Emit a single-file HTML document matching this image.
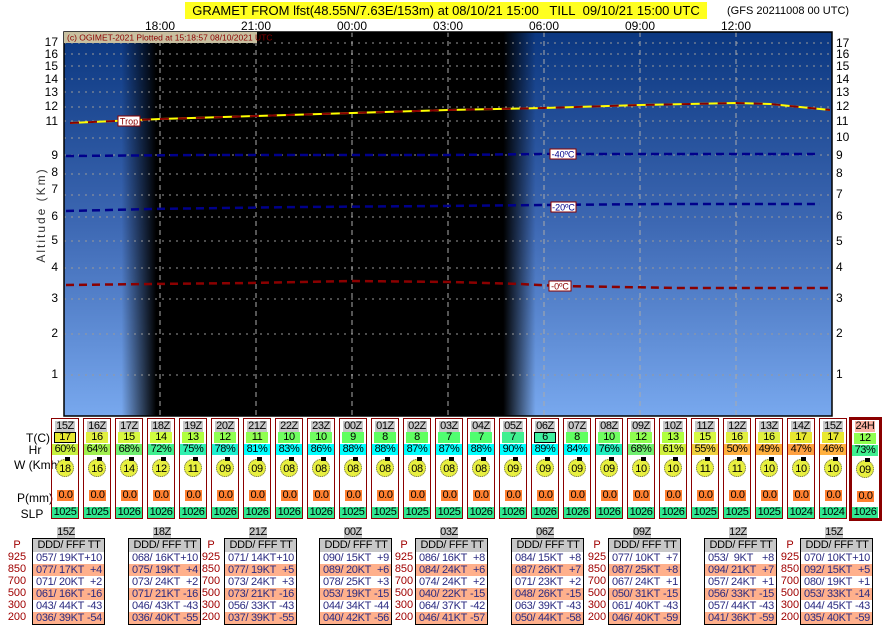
<!DOCTYPE html>
<html><head><meta charset="utf-8"><style>
*{margin:0;padding:0;box-sizing:border-box}
body{width:896px;height:640px;background:#fff;position:relative;overflow:hidden;font-family:"Liberation Sans",sans-serif;color:#000}
.a{position:absolute}
.title{left:185px;top:2px;width:522px;height:17px;background:#ffff20;font-size:13px;line-height:17px;text-align:center;white-space:nowrap}
.gfs{left:727px;top:5px;font-size:11px}
.tl{top:19px;font-size:12px;width:50px;text-align:center;margin-left:-25px}
.yl{font-size:12px;line-height:12px;width:20px}
.yl.l{left:38px;text-align:right}
.yl.r{left:836px}
.c{position:absolute;top:418px;width:28px;height:101px;border:1px solid #8b0000;font-size:11px;letter-spacing:-0.4px}
.c b{position:absolute;font-weight:normal;text-align:center;height:11px;line-height:11px}
.h{top:2px;left:3px;width:20px;background:#c8c8c8}
.t{top:13px;left:2px;width:22px}
.r{top:25px;left:0;width:26px}
.w{top:40px;left:4px;width:18px;height:18px!important;line-height:18px!important;border-radius:50%;border:1px dotted #666;background:#e8f040}
.w:before{content:"";position:absolute;left:8px;top:-3px;width:5px;height:4px;background:#000}
.p{top:71px;left:5px;width:17px;background:#ff8030}
.s{top:88px;left:0;width:26px;background:#30e890}
.lab{font-size:12px;left:13px;width:50px;text-align:center}
.tb{position:absolute;top:538px;width:73px;height:87px;border:1.5px solid #000;font-size:11px;color:#2a2a80;letter-spacing:-0.3px}
.tb div{height:12px;line-height:12px;display:flex;justify-content:space-between;padding:0 2px 0 3px}
.tb div.hd{height:13px;line-height:13px;background:#c8c8c8;color:#000;justify-content:center}
.tb div.o{background:#ffb08c}
.th{position:absolute;top:527px;width:18px;height:11px;background:#c8c8c8;font-size:11px;line-height:11px;text-align:center;letter-spacing:-0.4px}
.pl{position:absolute;top:539px;width:26px;font-size:11px;color:#a00000;text-align:center;line-height:12px}
.pl span{display:block;height:12px}
</style></head><body>
<div class="a title">GRAMET FROM lfst(48.55N/7.63E/153m) at 08/10/21 15:00&nbsp;&nbsp; TILL&nbsp; 09/10/21 15:00 UTC</div>
<div class="a gfs">(GFS 20211008 00 UTC)</div>
<div class="a tl" style="left:160px">18:00</div><div class="a tl" style="left:256px">21:00</div><div class="a tl" style="left:352px">00:00</div><div class="a tl" style="left:448px">03:00</div><div class="a tl" style="left:544px">06:00</div><div class="a tl" style="left:640px">09:00</div><div class="a tl" style="left:736px">12:00</div>

<svg class="a" style="left:0;top:0" width="896" height="640">
<defs>
<linearGradient id="bg" x1="0" y1="0" x2="0" y2="1"><stop offset="0" stop-color="#0b3780"/><stop offset="0.5" stop-color="#3d68b3"/><stop offset="1" stop-color="#78a8ee"/></linearGradient>
<linearGradient id="dk" gradientUnits="userSpaceOnUse" x1="64" y1="0" x2="832" y2="0">
<stop offset="0" stop-color="#000" stop-opacity="0"/>
<stop offset="0.075" stop-color="#000" stop-opacity="0"/>
<stop offset="0.12" stop-color="#000" stop-opacity="1"/>
<stop offset="0.572" stop-color="#000" stop-opacity="1"/>
<stop offset="0.614" stop-color="#000" stop-opacity="0"/>
<stop offset="1" stop-color="#000" stop-opacity="0"/>
</linearGradient>
</defs>
<rect x="64" y="32" width="768" height="384" fill="url(#bg)"/>
<rect x="64" y="32" width="768" height="384" fill="url(#dk)"/>
<g stroke="#999" stroke-width="1" stroke-dasharray="2 5">
<line x1="64" x2="832" y1="43" y2="43"/><line x1="64" x2="832" y1="54" y2="54"/><line x1="64" x2="832" y1="66" y2="66"/><line x1="64" x2="832" y1="79" y2="79"/><line x1="64" x2="832" y1="92" y2="92"/><line x1="64" x2="832" y1="107" y2="107"/><line x1="64" x2="832" y1="121" y2="121"/><line x1="64" x2="832" y1="138" y2="138"/><line x1="64" x2="832" y1="155" y2="155"/><line x1="64" x2="832" y1="174" y2="174"/><line x1="64" x2="832" y1="195" y2="195"/><line x1="64" x2="832" y1="217" y2="217"/><line x1="64" x2="832" y1="241" y2="241"/><line x1="64" x2="832" y1="268" y2="268"/><line x1="64" x2="832" y1="299" y2="299"/><line x1="64" x2="832" y1="334" y2="334"/><line x1="64" x2="832" y1="375" y2="375"/>
</g>
<g stroke="#aaa" stroke-width="1" stroke-dasharray="5 4">
<line x1="160" x2="160" y1="32" y2="416"/><line x1="256" x2="256" y1="32" y2="416"/><line x1="352" x2="352" y1="32" y2="416"/><line x1="448" x2="448" y1="32" y2="416"/><line x1="544" x2="544" y1="32" y2="416"/><line x1="640" x2="640" y1="32" y2="416"/><line x1="736" x2="736" y1="32" y2="416"/>
</g>
<polyline fill="none" stroke="#ffff00" stroke-width="2" points="70,123 160,119 256,116 352,113 448,110 544,108 640,105 736,103 770,104 800,107 830,110"/>
<polyline fill="none" stroke="#8b0000" stroke-width="2" stroke-dasharray="9 9" points="70,123 160,119 256,116 352,113 448,110 544,108 640,105 736,103 770,104 800,107 830,110"/>
<polyline fill="none" stroke="#00008b" stroke-width="2.5" stroke-dasharray="8 5" points="66,156 200,155 450,155 544,154 820,154"/>
<polyline fill="none" stroke="#00008b" stroke-width="2.5" stroke-dasharray="8 5" points="66,211 150,209 300,207 440,206 545,205 660,204 820,204"/>
<polyline fill="none" stroke="#8b0000" stroke-width="2.5" stroke-dasharray="8 5" points="66,285 150,284 250,283 352,281 450,282 520,284 560,286 680,288 832,288"/>
<rect x="64" y="32" width="768" height="384" fill="none" stroke="#000" stroke-width="1.5"/>
<rect x="118" y="116" width="22" height="10" fill="#fff" stroke="#8b0000"/><text x="129" y="124.5" font-size="9" text-anchor="middle" fill="#8b0000" font-family="Liberation Sans">Trop</text>
<rect x="550" y="149" width="26" height="10" fill="#fff" stroke="#8b0000"/><text x="563" y="157.5" font-size="9" text-anchor="middle" fill="#00008b" font-family="Liberation Sans">-40ºC</text>
<rect x="551" y="202" width="25" height="10" fill="#fff" stroke="#8b0000"/><text x="563.5" y="210.5" font-size="9" text-anchor="middle" fill="#00008b" font-family="Liberation Sans">-20ºC</text>
<rect x="549" y="281" width="22" height="10" fill="#fff" stroke="#8b0000"/><text x="560" y="289.5" font-size="9" text-anchor="middle" fill="#8b0000" font-family="Liberation Sans">-0ºC</text>
<rect x="64" y="32" width="193" height="11" fill="#c8c0a0"/>
<text x="67" y="40.5" font-size="8.5" fill="#8b0000" font-family="Liberation Sans">(c) OGIMET-2021 Plotted at 15:18:57 08/10/2021 UTC</text>
<text transform="translate(45,215) rotate(-90)" font-size="12" text-anchor="middle" fill="#333" letter-spacing="2" font-family="Liberation Sans">Altitude (Km)</text>
</svg>

<div class="a yl l" style="top:36px">17</div><div class="a yl l" style="top:48px">16</div><div class="a yl l" style="top:60px">15</div><div class="a yl l" style="top:73px">14</div><div class="a yl l" style="top:86px">13</div><div class="a yl l" style="top:100px">12</div><div class="a yl l" style="top:115px">11</div><div class="a yl l" style="top:149px">9</div><div class="a yl l" style="top:166px">8</div><div class="a yl l" style="top:183px">7</div><div class="a yl l" style="top:210px">6</div><div class="a yl l" style="top:234px">5</div><div class="a yl l" style="top:261px">4</div><div class="a yl l" style="top:292px">3</div><div class="a yl l" style="top:327px">2</div><div class="a yl l" style="top:368px">1</div>
<div class="a yl r" style="top:37px">17</div><div class="a yl r" style="top:48px">16</div><div class="a yl r" style="top:60px">15</div><div class="a yl r" style="top:73px">14</div><div class="a yl r" style="top:86px">13</div><div class="a yl r" style="top:100px">12</div><div class="a yl r" style="top:115px">11</div><div class="a yl r" style="top:131px">10</div><div class="a yl r" style="top:149px">9</div><div class="a yl r" style="top:167px">8</div><div class="a yl r" style="top:188px">7</div><div class="a yl r" style="top:210px">6</div><div class="a yl r" style="top:235px">5</div><div class="a yl r" style="top:261px">4</div><div class="a yl r" style="top:292px">3</div><div class="a yl r" style="top:327px">2</div><div class="a yl r" style="top:368px">1</div>

<div class="a lab" style="top:431px">T(C)</div>
<div class="a lab" style="top:443px;left:10px">Hr</div>
<div class="a lab" style="top:458px;left:14px;width:60px;text-align:left">W (Kmh)</div>
<div class="a lab" style="top:491px;left:10px">P(mm)</div>
<div class="a lab" style="top:507px;left:7px">SLP</div>

<div class="c" style="left:51px"><b class="h">15Z</b><b class="t" style="background:#e8e830;border:1px solid #000;line-height:9px">17</b><b class="r" style="background:#c8f040">60%</b><b class="w">18</b><b class="p">0.0</b><b class="s">1025</b></div>
<div class="c" style="left:83px"><b class="h">16Z</b><b class="t" style="background:#e0f040">16</b><b class="r" style="background:#a0f050">64%</b><b class="w">16</b><b class="p">0.0</b><b class="s">1025</b></div>
<div class="c" style="left:115px"><b class="h">17Z</b><b class="t" style="background:#d8f840">15</b><b class="r" style="background:#70f070">68%</b><b class="w">14</b><b class="p">0.0</b><b class="s">1026</b></div>
<div class="c" style="left:147px"><b class="h">18Z</b><b class="t" style="background:#d0ff40">14</b><b class="r" style="background:#40f090">72%</b><b class="w">12</b><b class="p">0.0</b><b class="s">1026</b></div>
<div class="c" style="left:179px"><b class="h">19Z</b><b class="t" style="background:#b0ff40">13</b><b class="r" style="background:#30f0b0">75%</b><b class="w">11</b><b class="p">0.0</b><b class="s">1026</b></div>
<div class="c" style="left:211px"><b class="h">20Z</b><b class="t" style="background:#90ff50">12</b><b class="r" style="background:#20f0d0">78%</b><b class="w">09</b><b class="p">0.0</b><b class="s">1026</b></div>
<div class="c" style="left:243px"><b class="h">21Z</b><b class="t" style="background:#90ff50">11</b><b class="r" style="background:#00ffff">81%</b><b class="w">09</b><b class="p">0.0</b><b class="s">1026</b></div>
<div class="c" style="left:275px"><b class="h">22Z</b><b class="t" style="background:#70ff60">10</b><b class="r" style="background:#00ffff">83%</b><b class="w">08</b><b class="p">0.0</b><b class="s">1026</b></div>
<div class="c" style="left:307px"><b class="h">23Z</b><b class="t" style="background:#70ff60">10</b><b class="r" style="background:#00ffff">86%</b><b class="w">08</b><b class="p">0.0</b><b class="s">1026</b></div>
<div class="c" style="left:339px"><b class="h">00Z</b><b class="t" style="background:#60ff60">9</b><b class="r" style="background:#00ffff">88%</b><b class="w">08</b><b class="p">0.0</b><b class="s">1025</b></div>
<div class="c" style="left:371px"><b class="h">01Z</b><b class="t" style="background:#60ff60">8</b><b class="r" style="background:#00ffff">88%</b><b class="w">08</b><b class="p">0.0</b><b class="s">1025</b></div>
<div class="c" style="left:403px"><b class="h">02Z</b><b class="t" style="background:#60ff60">8</b><b class="r" style="background:#00ffff">87%</b><b class="w">08</b><b class="p">0.0</b><b class="s">1025</b></div>
<div class="c" style="left:435px"><b class="h">03Z</b><b class="t" style="background:#50ff70">7</b><b class="r" style="background:#00ffff">87%</b><b class="w">08</b><b class="p">0.0</b><b class="s">1025</b></div>
<div class="c" style="left:467px"><b class="h">04Z</b><b class="t" style="background:#50ff70">7</b><b class="r" style="background:#00ffff">88%</b><b class="w">08</b><b class="p">0.0</b><b class="s">1026</b></div>
<div class="c" style="left:499px"><b class="h">05Z</b><b class="t" style="background:#40f090">7</b><b class="r" style="background:#00ffff">90%</b><b class="w">09</b><b class="p">0.0</b><b class="s">1026</b></div>
<div class="c" style="left:531px"><b class="h">06Z</b><b class="t" style="background:#40f0a0;border:1px solid #000;line-height:9px">6</b><b class="r" style="background:#00ffff">89%</b><b class="w">09</b><b class="p">0.0</b><b class="s">1026</b></div>
<div class="c" style="left:563px"><b class="h">07Z</b><b class="t" style="background:#60ff60">8</b><b class="r" style="background:#00ffff">84%</b><b class="w">09</b><b class="p">0.0</b><b class="s">1026</b></div>
<div class="c" style="left:595px"><b class="h">08Z</b><b class="t" style="background:#70ff60">10</b><b class="r" style="background:#20f0c0">76%</b><b class="w">09</b><b class="p">0.0</b><b class="s">1026</b></div>
<div class="c" style="left:627px"><b class="h">09Z</b><b class="t" style="background:#90ff50">12</b><b class="r" style="background:#70f070">68%</b><b class="w">10</b><b class="p">0.0</b><b class="s">1026</b></div>
<div class="c" style="left:659px"><b class="h">10Z</b><b class="t" style="background:#b0ff40">13</b><b class="r" style="background:#d0f040">61%</b><b class="w">10</b><b class="p">0.0</b><b class="s">1026</b></div>
<div class="c" style="left:691px"><b class="h">11Z</b><b class="t" style="background:#d8f840">15</b><b class="r" style="background:#f0d040">55%</b><b class="w">11</b><b class="p">0.0</b><b class="s">1025</b></div>
<div class="c" style="left:723px"><b class="h">12Z</b><b class="t" style="background:#e0f040">16</b><b class="r" style="background:#ffb040">50%</b><b class="w">11</b><b class="p">0.0</b><b class="s">1025</b></div>
<div class="c" style="left:755px"><b class="h">13Z</b><b class="t" style="background:#e0f040">16</b><b class="r" style="background:#ffb040">49%</b><b class="w">10</b><b class="p">0.0</b><b class="s">1025</b></div>
<div class="c" style="left:787px"><b class="h">14Z</b><b class="t" style="background:#e8e830">17</b><b class="r" style="background:#ffa040">47%</b><b class="w">10</b><b class="p">0.0</b><b class="s">1024</b></div>
<div class="c" style="left:819px"><b class="h">15Z</b><b class="t" style="background:#e8e830">17</b><b class="r" style="background:#ffb040">46%</b><b class="w">10</b><b class="p">0.0</b><b class="s">1024</b></div>
<div class="c" style="left:849px;top:417px;width:33px;height:104px;border:3px solid #8b0000"><b class="h" style="background:#f8b0a0;left:3px;top:1px">24H</b><b class="t" style="background:#90ff50;left:2px;top:13px">12</b><b class="r" style="background:#40f090;left:0;top:25px">73%</b><b class="w" style="left:4px;top:40px">09</b><b class="p" style="left:5px;top:71px">0.0</b><b class="s" style="left:0;top:87px">1026</b></div>

<div class="pl" style="left:4px"><span>P</span><span>925</span><span>850</span><span>700</span><span>500</span><span>300</span><span>200</span></div>
<div class="pl" style="left:198px"><span>P</span><span>925</span><span>850</span><span>700</span><span>500</span><span>300</span><span>200</span></div>
<div class="pl" style="left:391px"><span>P</span><span>925</span><span>850</span><span>700</span><span>500</span><span>300</span><span>200</span></div>
<div class="pl" style="left:584px"><span>P</span><span>925</span><span>850</span><span>700</span><span>500</span><span>300</span><span>200</span></div>
<div class="pl" style="left:777px"><span>P</span><span>925</span><span>850</span><span>700</span><span>500</span><span>300</span><span>200</span></div>

<div class="th" style="left:57px">15Z</div>
<div class="tb" style="left:32px"><div class="hd"><span>DDD/ FFF TT</span></div><div><span>057/ 19KT</span><span>+10</span></div><div class="o"><span>077/ 17KT</span><span>+4</span></div><div><span>071/ 20KT</span><span>+2</span></div><div class="o"><span>061/ 16KT</span><span>-16</span></div><div><span>043/ 44KT</span><span>-43</span></div><div class="o"><span>036/ 39KT</span><span>-54</span></div></div>
<div class="th" style="left:153px">18Z</div>
<div class="tb" style="left:128px"><div class="hd"><span>DDD/ FFF TT</span></div><div><span>068/ 16KT</span><span>+10</span></div><div class="o"><span>075/ 19KT</span><span>+4</span></div><div><span>073/ 24KT</span><span>+2</span></div><div class="o"><span>071/ 21KT</span><span>-16</span></div><div><span>046/ 43KT</span><span>-43</span></div><div class="o"><span>036/ 40KT</span><span>-55</span></div></div>
<div class="th" style="left:249px">21Z</div>
<div class="tb" style="left:224px"><div class="hd"><span>DDD/ FFF TT</span></div><div><span>071/ 14KT</span><span>+10</span></div><div class="o"><span>077/ 19KT</span><span>+5</span></div><div><span>073/ 24KT</span><span>+3</span></div><div class="o"><span>073/ 21KT</span><span>-16</span></div><div><span>056/ 33KT</span><span>-43</span></div><div class="o"><span>037/ 39KT</span><span>-55</span></div></div>
<div class="th" style="left:344px">00Z</div>
<div class="tb" style="left:319px"><div class="hd"><span>DDD/ FFF TT</span></div><div><span>090/ 15KT</span><span>+9</span></div><div class="o"><span>089/ 20KT</span><span>+6</span></div><div><span>078/ 25KT</span><span>+3</span></div><div class="o"><span>053/ 19KT</span><span>-15</span></div><div><span>044/ 34KT</span><span>-44</span></div><div class="o"><span>040/ 42KT</span><span>-56</span></div></div>
<div class="th" style="left:440px">03Z</div>
<div class="tb" style="left:415px"><div class="hd"><span>DDD/ FFF TT</span></div><div><span>086/ 16KT</span><span>+8</span></div><div class="o"><span>084/ 24KT</span><span>+6</span></div><div><span>074/ 24KT</span><span>+2</span></div><div class="o"><span>040/ 22KT</span><span>-15</span></div><div><span>064/ 37KT</span><span>-42</span></div><div class="o"><span>046/ 41KT</span><span>-57</span></div></div>
<div class="th" style="left:536px">06Z</div>
<div class="tb" style="left:511px"><div class="hd"><span>DDD/ FFF TT</span></div><div><span>084/ 15KT</span><span>+8</span></div><div class="o"><span>087/ 26KT</span><span>+7</span></div><div><span>071/ 23KT</span><span>+2</span></div><div class="o"><span>048/ 26KT</span><span>-15</span></div><div><span>063/ 39KT</span><span>-43</span></div><div class="o"><span>050/ 44KT</span><span>-58</span></div></div>
<div class="th" style="left:633px">09Z</div>
<div class="tb" style="left:608px"><div class="hd"><span>DDD/ FFF TT</span></div><div><span>077/ 10KT</span><span>+7</span></div><div class="o"><span>087/ 25KT</span><span>+8</span></div><div><span>067/ 24KT</span><span>+1</span></div><div class="o"><span>050/ 31KT</span><span>-15</span></div><div><span>061/ 40KT</span><span>-43</span></div><div class="o"><span>046/ 40KT</span><span>-59</span></div></div>
<div class="th" style="left:729px">12Z</div>
<div class="tb" style="left:704px"><div class="hd"><span>DDD/ FFF TT</span></div><div><span>053/&nbsp; 9KT</span><span>+8</span></div><div class="o"><span>094/ 21KT</span><span>+7</span></div><div><span>057/ 24KT</span><span>+1</span></div><div class="o"><span>056/ 33KT</span><span>-15</span></div><div><span>057/ 44KT</span><span>-43</span></div><div class="o"><span>041/ 36KT</span><span>-59</span></div></div>
<div class="th" style="left:825px">15Z</div>
<div class="tb" style="left:800px"><div class="hd"><span>DDD/ FFF TT</span></div><div><span>070/ 10KT</span><span>+10</span></div><div class="o"><span>092/ 15KT</span><span>+5</span></div><div><span>080/ 19KT</span><span>+1</span></div><div class="o"><span>053/ 33KT</span><span>-14</span></div><div><span>044/ 45KT</span><span>-43</span></div><div class="o"><span>035/ 40KT</span><span>-59</span></div></div>
</body></html>
